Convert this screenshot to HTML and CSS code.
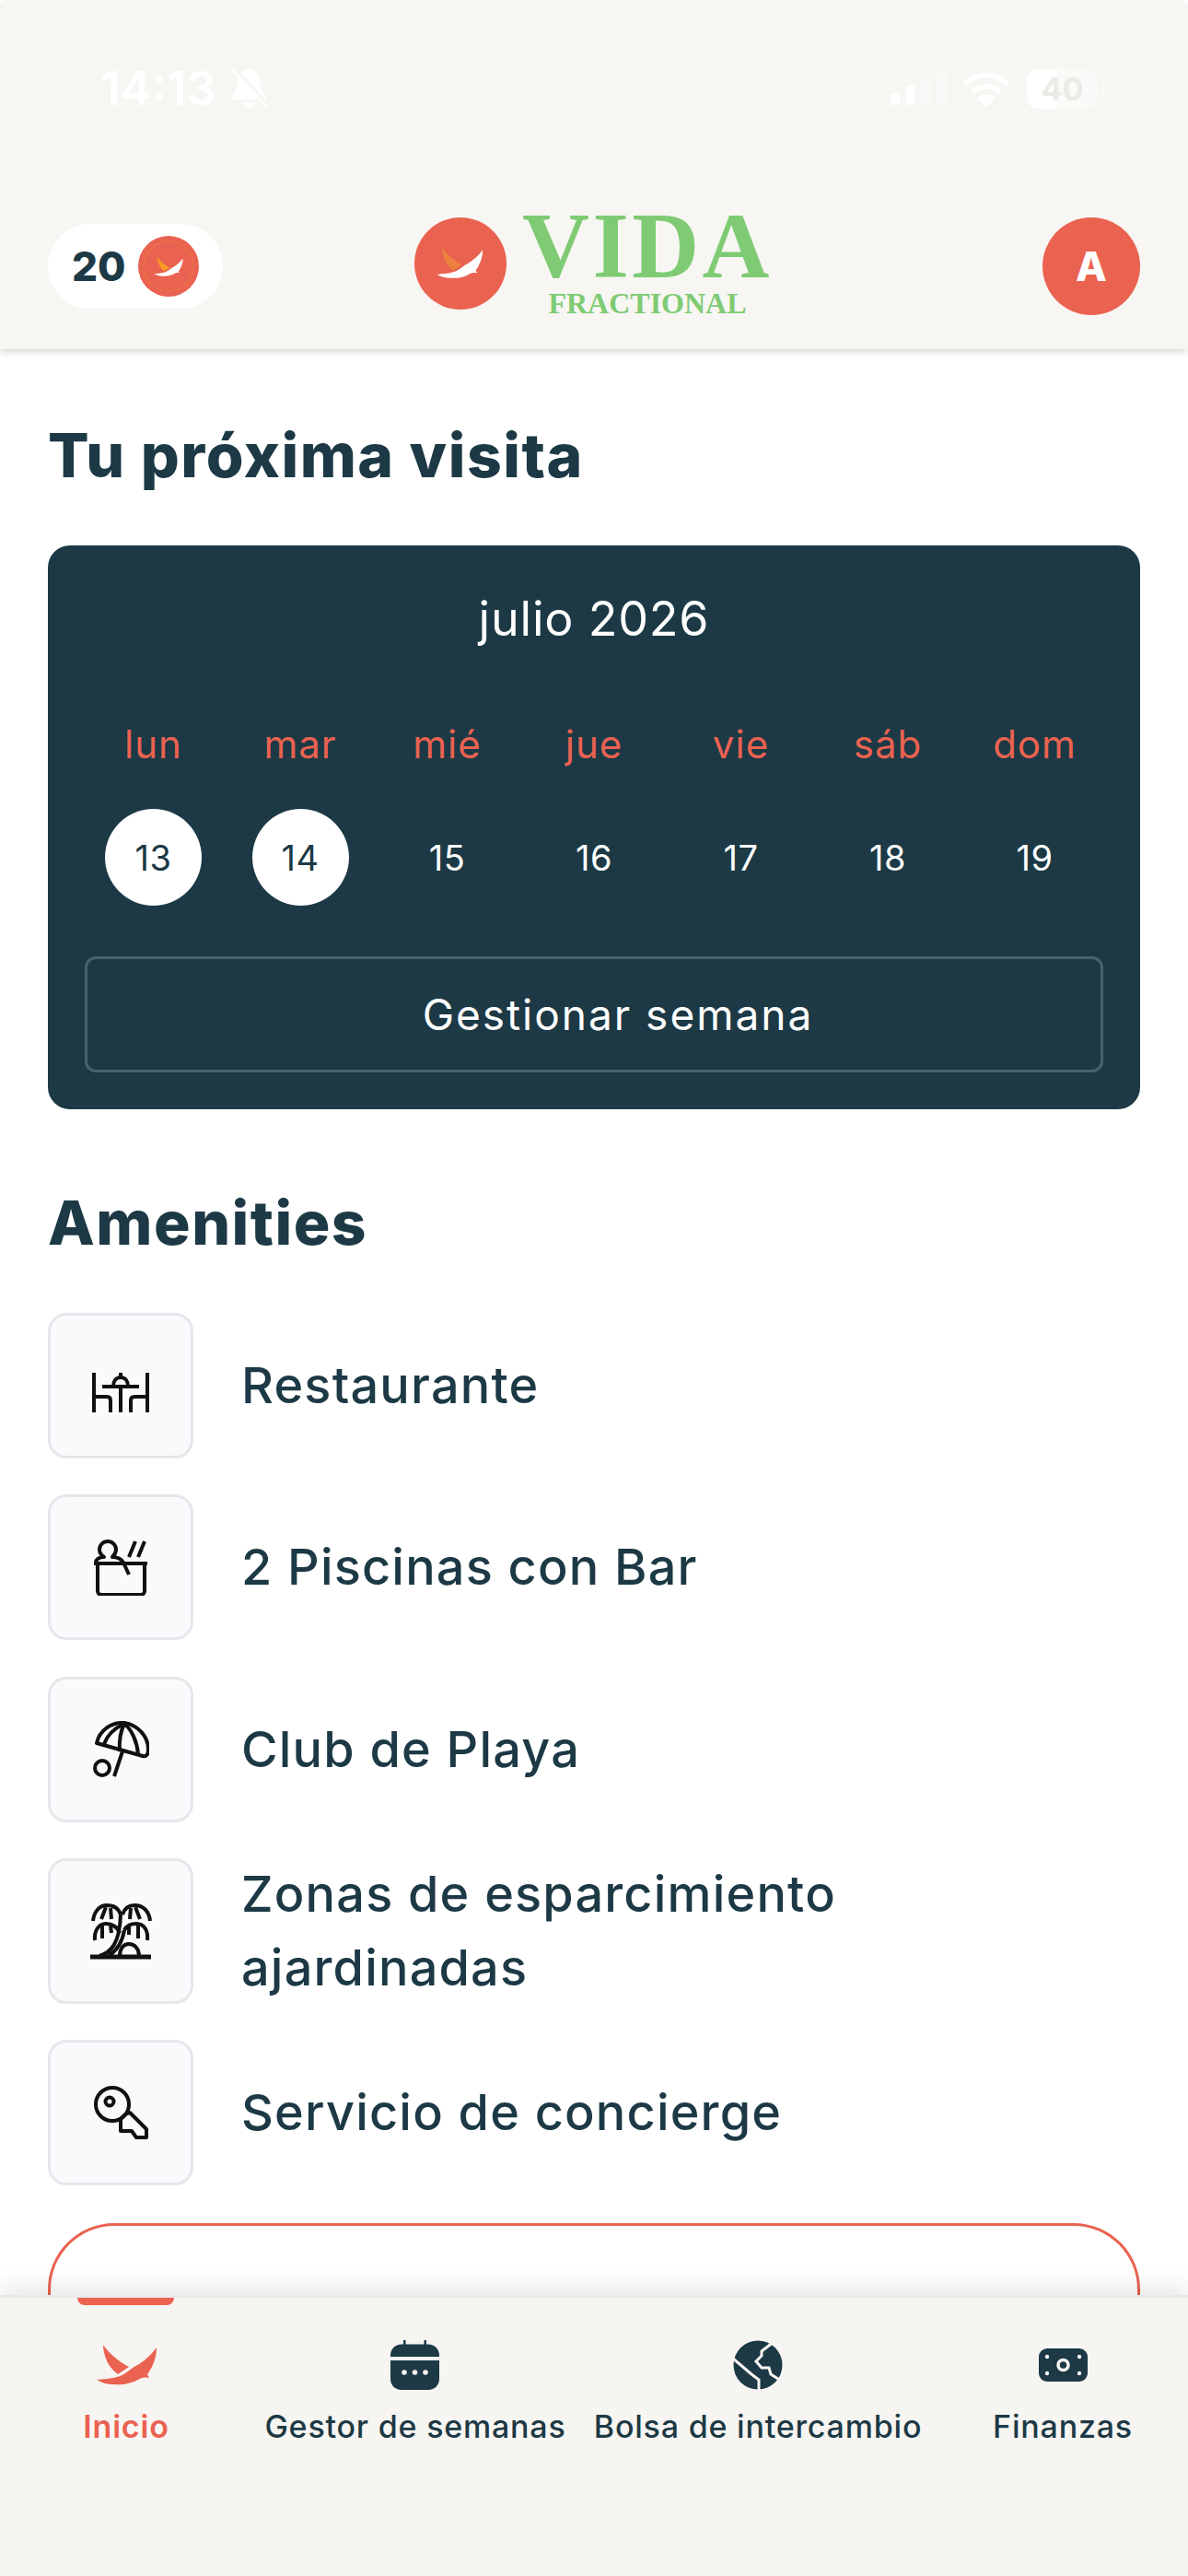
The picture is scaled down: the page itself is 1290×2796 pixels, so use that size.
FILE: index.html
```html
<!DOCTYPE html>
<html lang="es">
<head>
    <meta charset="UTF-8">
    <title>Vida Fractional</title>
    <link rel="stylesheet" href="styles.css">
</head>
<body>
<div class="phone">
    <header class="topbar">
        <div class="statusbar">
            <div class="status-left">
                <span class="clock">14:13</span>
                <svg class="bell" viewBox="0 0 39 44" width="39" height="44"><path d="M20 1c-8 0-12 6-13 14-1 6-2 11-7 16v3h38v-3c-5-5-6-10-7-16-1-8-5-14-11-14z" fill="#fff"/><path d="M13 37h13c-1 4-3 6-6 6s-6-2-7-6z" fill="#fff"/><path d="M1-2l36 40" stroke="#f7f6f2" stroke-width="6"/><path d="M1 1l37 41" stroke="#fff" stroke-width="2.500"/></svg>
            </div>
            <div class="status-right">
                <svg class="signal" viewBox="0 0 60 35" width="60" height="35"><rect x="0" y="22" width="10" height="13" rx="2" fill="#fff"/><rect x="17" y="14" width="10" height="21" rx="2" fill="#fff"/><rect x="33" y="7" width="10" height="28" rx="2" fill="#fff" opacity=".4"/><rect x="50" y="0" width="10" height="35" rx="2" fill="#fff" opacity=".4"/></svg>
                <svg class="wifi" viewBox="0 0 52 39" width="52" height="39"><path d="M3 14a33 33 0 0 1 46 0M11 23a22 22 0 0 1 30 0" fill="none" stroke="#fff" stroke-width="6"/><path d="M26 39l-10-9a14 14 0 0 1 20 0z" fill="#fff"/></svg>
                <div class="battery"><span>40</span></div>
            </div>
        </div>
        <div class="navrow">
            <div class="points">
                <span class="points-num">20</span>
                <span class="coin">
                    <svg viewBox="0 0 66 66" width="66" height="66"><circle cx="33" cy="33" r="27" fill="none" stroke="#ee8040" stroke-width="1.500" opacity=".5"/><g transform="translate(17 23) scale(.48)"><path d="M8 0C8 12 14 25 24 32L36 24C25 18 15 10 8 0Z" fill="#f59a23"/><path d="M66 3C58 14 48 21 40 25 34 30 28 34 23 35 16 37 8 37 1 38 6 41 12 43 20 43 30 44 38 42 46 38 49 36 52 35 58 36L56 32C62 24 66 14 66 3Z" fill="#fff"/></g></svg>
                </span>
            </div>
            <div class="brand">
                <span class="brand-mark">
                    <svg viewBox="0 0 100 100" width="100" height="100"><g transform="translate(24 33) scale(.76)"><path d="M8 0C8 12 14 25 24 32L36 24C25 18 15 10 8 0Z" fill="#ee8040"/><path d="M66 3C58 14 48 21 40 25 34 30 28 34 23 35 16 37 8 37 1 38 6 41 12 43 20 43 30 44 38 42 46 38 49 36 52 35 58 36L56 32C62 24 66 14 66 3Z" fill="#fff"/></g></svg>
                </span>
                <div class="wordmark">
                    <span class="wordmark-top">VIDA</span>
                    <span class="wordmark-sub">FRACTIONAL</span>
                </div>
            </div>
            <span class="avatar">A</span>
        </div>
    </header>

    <main class="content">
        <h1 class="heading">Tu próxima visita</h1>
        <section class="visit">
            <div class="month">julio 2026</div>
            <div class="week">
                <span class="dayname">lun</span>
                <span class="dayname">mar</span>
                <span class="dayname">mié</span>
                <span class="dayname">jue</span>
                <span class="dayname">vie</span>
                <span class="dayname">sáb</span>
                <span class="dayname">dom</span>
                <span class="day day-on">13</span>
                <span class="day day-on">14</span>
                <span class="day">15</span>
                <span class="day">16</span>
                <span class="day">17</span>
                <span class="day">18</span>
                <span class="day">19</span>
            </div>
            <div class="manage">Gestionar semana</div>
        </section>

        <h2 class="heading heading-second">Amenities</h2>
        <ul class="amenities">
            <li class="amenity">
                <span class="amenity-icon">
                    <svg viewBox="0 0 62 62" width="62" height="62" fill="none" stroke="#111" stroke-width="4"><path d="M2 17v43M2 43h14c3 0 4 2 4 4v13M60 17v43M60 43H46c-3 0-4 2-4 4v13M31 32v28M11 32h40M23 32c0-6 3-10 8-10s8 4 8 10M31 17v5"/></svg>
                </span>
                <span class="amenity-name">Restaurante</span>
            </li>
            <li class="amenity">
                <span class="amenity-icon">
                    <svg viewBox="0 0 62 62" width="62" height="62" fill="none" stroke="#111" stroke-width="4" stroke-linejoin="round"><path d="M6 27v30c0 2 2 4 4 4h43c2 0 4-2 4-4V27M2 27h58"/><path d="M4 26c0-3 3-6 9-6-3-2-5-5-5-8 0-5 4-9 9-9s9 4 9 9c0 3-2 6-4 8 5 0 9 1 12 6l6 13"/><path d="M40 20l7-17M50 20l7-17"/></svg>
                </span>
                <span class="amenity-name">2 Piscinas con Bar</span>
            </li>
            <li class="amenity">
                <span class="amenity-icon">
                    <svg viewBox="0 0 62 62" width="62" height="62" fill="none" stroke="#111" stroke-width="4" stroke-linejoin="round"><path d="M5 24C8 10 21 1 35 2c14 2 26 14 26 29 0 5-2 8-6 7z"/><path d="M35 3C26 7 17 14 13 25M35 3c-4 8-6 18-5 30M35 3c8 6 14 20 15 33M33 33l-9 27"/><circle cx="11" cy="51" r="8"/></svg>
                </span>
                <span class="amenity-name">Club de Playa</span>
            </li>
            <li class="amenity">
                <span class="amenity-icon">
                    <svg class="icon-over" viewBox="0 0 62 62" width="62" height="62" fill="none" stroke="#111" stroke-width="4"><path d="M-2 59h66" stroke-width="5"/><path d="M8 58c13-4 22-14 23-45M18 58c9-6 15-16 17-28"/><path d="M30 58c0-8 4-13 10-13s11 5 11 13"/><path d="M1 20C2 10 8 3 16 3s13 4 15 10M15 5l-5 13M20 6l1 12"/><path d="M63 20C62 10 56 3 46 3c-7 0-11 4-13 10M47 5l5 13M42 6l-1 12"/><path d="M3 41C2 31 7 23 15 23c7 0 13 4 15 10M11 25l0 14M20 25l1 8"/><path d="M60 41C61 31 57 23 48 23c-6 0-11 3-13 7M50 25l0 14M40 26v9"/></svg>
                </span>
                <span class="amenity-name">Zonas de esparcimiento ajardinadas</span>
            </li>
            <li class="amenity">
                <span class="amenity-icon">
                    <svg viewBox="0 0 62 62" width="62" height="62" fill="none" stroke="#111" stroke-width="4" stroke-linejoin="round"><circle cx="22" cy="22" r="18"/><circle cx="19" cy="19" r="4.500"/><path d="M36 33l5-2 18 18v9H48l-5-7H31V38z"/></svg>
                </span>
                <span class="amenity-name">Servicio de concierge</span>
            </li>
        </ul>
        <div class="peek"></div>
    </main>

    <nav class="tabbar">
        <div class="tab tab-on">
            <span class="tab-icon">
                <svg viewBox="0 0 66 44" width="66" height="44" fill="#ea6250"><path d="M8 0C8 12 14 25 24 32L36 24C25 18 15 10 8 0Z"/><path d="M66 3C58 14 48 21 40 25 34 30 28 34 23 35 16 37 8 37 1 38 6 41 12 43 20 43 30 44 38 42 46 38 49 36 52 35 58 36L56 32C62 24 66 14 66 3Z"/></svg>
            </span>
            <span>Inicio</span>
        </div>
        <div class="tab">
            <span class="tab-icon">
                <svg viewBox="0 0 54 54" width="54" height="54" fill="#1c3945"><path d="M14 0h2.500v4.500h20V0H39v4.500h2c7 0 12 5 12 12V18H0v-1.500c0-7 5-12 12-12h2zM0 22h53v20c0 7-5 12-12 12H12C5 54 0 49 0 42z"/><g fill="#f7f5f2"><circle cx="15" cy="35" r="2.800"/><circle cx="26.500" cy="35" r="2.800"/><circle cx="38" cy="35" r="2.800"/></g></svg>
            </span>
            <span>Gestor de semanas</span>
        </div>
        <div class="tab">
            <span class="tab-icon">
                <svg viewBox="0 0 54 54" width="54" height="54"><circle cx="27" cy="27" r="26.500" fill="#1c3945"/><path d="M0 20l20 17 8 6v11M44 2 31 12v5l-6 6 6 7h8l2 7 11 7" fill="none" stroke="#f7f5f2" stroke-width="3"/></svg>
            </span>
            <span>Bolsa de intercambio</span>
        </div>
        <div class="tab">
            <span class="tab-icon">
                <svg viewBox="0 0 53 36" width="53" height="36"><rect x="0" y="0" width="53" height="36" rx="9" fill="#1c3945"/><circle cx="26.500" cy="18" r="5.500" fill="none" stroke="#f7f5f2" stroke-width="3.500"/><g fill="#f7f5f2"><circle cx="9" cy="9" r="2.200"/><circle cx="44" cy="9" r="2.200"/><circle cx="9" cy="27" r="2.200"/><circle cx="44" cy="27" r="2.200"/></g></svg>
            </span>
            <span>Finanzas</span>
        </div>
    </nav>
</div>
</body>
</html>
```

FILE: styles.css
```css
* {
    box-sizing: border-box;
}
html, body {
    margin: 0;
    padding: 0;
    background: #fff;
}
body {
    font-family: Inter, "Noto Sans", sans-serif;
    color: #1c3945;
}
.phone {
    width: 1290px;
    height: 2796px;
    display: flex;
    flex-direction: column;
    overflow: hidden;
}

/* top bar */
.topbar {
    height: 379px;
    background: #f7f6f2;
    border-radius: 10px 10px 0 0;
    box-shadow: 0 3px 8px rgba(0, 0, 0, .16);
    position: relative;
    z-index: 2;
    flex-shrink: 0;
}
.statusbar {
    height: 118px;
    padding: 74px 98px 0 109px;
    display: flex;
    justify-content: space-between;
    align-items: center;
    color: #fff;
}
.status-left, .status-right {
    display: flex;
    align-items: center;
}
.status-left {
    gap: 16px;
}
.status-right {
    gap: 18px;
}
.clock {
    font-size: 51px;
    font-weight: 600;
    line-height: 44px;
}
.battery {
    width: 77px;
    height: 43px;
    background: linear-gradient(to right, #fff 43%, rgba(255, 255, 255, .45) 43%);
    border-radius: 13px;
    text-align: center;
    font-size: 34px;
    font-weight: 700;
    line-height: 43px;
    color: #eceae6;
    position: relative;
}
.battery::after {
    content: "";
    position: absolute;
    right: -8px;
    top: 17px;
    width: 4px;
    height: 10px;
    border-radius: 0 3px 3px 0;
    background: rgba(255, 255, 255, .6);
}
.navrow {
    margin-top: 115px;
    padding: 0 52px;
    display: flex;
    align-items: center;
    justify-content: space-between;
}
.points {
    width: 190px;
    height: 92px;
    background: #fff;
    border-radius: 46px;
    padding: 0 26px;
    display: flex;
    align-items: center;
    justify-content: space-between;
}
.points-num {
    font-size: 44px;
    font-weight: 800;
}
.coin {
    width: 66px;
    height: 66px;
    border-radius: 50%;
    background: #ea6250;
    display: block;
}
.coin svg, .brand-mark svg {
    display: block;
}
.brand {
    display: flex;
    align-items: flex-start;
    gap: 17px;
    margin-right: 85px;
}
.brand-mark {
    width: 100px;
    height: 100px;
    border-radius: 50%;
    background: #ea6250;
    display: block;
    margin-top: 3px;
}
.wordmark {
    width: 272px;
    display: flex;
    flex-direction: column;
    align-items: center;
    color: #7fcb74;
    font-family: "Liberation Serif", serif;
    font-weight: 700;
}
.wordmark-top {
    font-size: 101px;
    line-height: 68px;
    letter-spacing: 3.500px;
}
.wordmark-sub {
    font-size: 32px;
    line-height: 30px;
    margin-top: 13px;
}
.avatar {
    width: 106px;
    height: 106px;
    border-radius: 50%;
    background: #ea6250;
    color: #fff;
    font-size: 44px;
    font-weight: 800;
    display: flex;
    align-items: center;
    justify-content: center;
}

/* main */
.content {
    flex: 1;
    padding: 0 52px;
    min-height: 0;
    overflow: hidden;
}
.heading {
    margin: 0;
    font-size: 66px;
    font-weight: 800;
    line-height: 76px;
    letter-spacing: 1.500px;
    padding-top: 77px;
}
.heading-second {
    padding-top: 85px;
}
.visit {
    margin-top: 60px;
    background: #1c3945;
    border-radius: 24px;
    padding: 46px 40px 40px;
}
.month {
    color: #fff;
    text-align: center;
    font-size: 52px;
    line-height: 68px;
    letter-spacing: .800px;
}
.week {
    display: grid;
    grid-template-columns: repeat(7, 159.500px);
    justify-content: center;
    justify-items: center;
    align-items: center;
    row-gap: 46px;
    margin: 78px -6px 0 -6px;
}
.dayname {
    color: #ea6250;
    font-size: 42px;
    line-height: 48px;
    letter-spacing: 1px;
}
.day {
    width: 105px;
    height: 105px;
    border-radius: 50%;
    color: #fff;
    font-size: 38px;
    letter-spacing: .500px;
    display: flex;
    align-items: center;
    justify-content: center;
}
.day-on {
    background: #fff;
    color: #1c3945;
}
.manage {
    margin-top: 55px;
    height: 126px;
    padding-left: 52px;
    border: 3px solid #4a626e;
    border-radius: 12px;
    color: #fff;
    font-size: 46px;
    letter-spacing: 2px;
    display: flex;
    align-items: center;
    justify-content: center;
}
.amenities {
    list-style: none;
    margin: 60px 0 0;
    padding: 0;
}
.amenity {
    display: flex;
    align-items: center;
    gap: 52px;
    height: 158px;
    margin-bottom: 39.300px;
}
.amenity-icon {
    width: 158px;
    height: 158px;
    flex-shrink: 0;
    background: #f9fafc;
    border: 3px solid #e6e7eb;
    border-radius: 20px;
    display: flex;
    align-items: center;
    justify-content: center;
}
.icon-over {
    overflow: visible;
}
.amenity-name {
    font-size: 54px;
    line-height: 80px;
    font-weight: 500;
    letter-spacing: 1.200px;
    max-width: 800px;
}
.peek {
    margin-top: 41px;
    height: 200px;
    border: 3px solid #ea6250;
    border-bottom: 0;
    border-radius: 72px 72px 0 0;
}

/* bottom tabs */
.tabbar {
    height: 305px;
    flex-shrink: 0;
    background: #f7f5f2;
    border-top: 3px solid #e8e8ea;
    box-shadow: 0 -10px 24px rgba(0, 0, 0, .09);
    position: relative;
    display: flex;
    padding-top: 46px;
    z-index: 2;
}
.tab {
    display: flex;
    flex-direction: column;
    align-items: center;
    gap: 20px;
    font-size: 34px;
    font-weight: 500;
    line-height: 40px;
    letter-spacing: .800px;
    white-space: nowrap;
}
.tab:nth-child(1) {
    width: 274px;
}
.tab:nth-child(2) {
    width: 354px;
}
.tab:nth-child(3) {
    width: 390px;
}
.tab:nth-child(4) {
    width: 272px;
}
.tab-icon {
    height: 54px;
    display: flex;
    align-items: center;
}
.tab-on {
    color: #ea6250;
    font-weight: 600;
    position: relative;
}
.tab-on::before {
    content: "";
    position: absolute;
    top: -46px;
    left: 84px;
    width: 105px;
    height: 8px;
    background: #ea6250;
    border-radius: 0 0 8px 8px;
}
```
